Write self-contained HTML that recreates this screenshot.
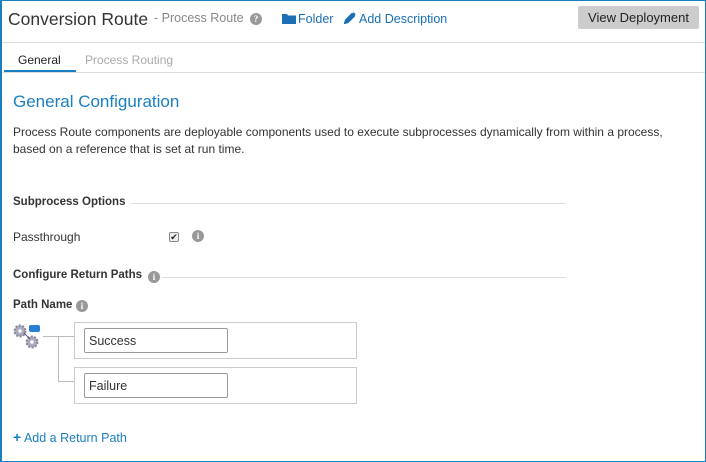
<!DOCTYPE html>
<html><head><style>
*{margin:0;padding:0;box-sizing:border-box}
body{width:706px;height:462px;background:#fff;font-family:"Liberation Sans",sans-serif;position:relative;overflow:hidden;color:#333}
.frame{position:absolute;left:0;top:0;width:706px;height:462px;border:1px solid #1a7fc1;border-left-width:2px}
.a{position:absolute;white-space:nowrap}
.hr{position:absolute;height:1px;background:#ddd}
.info{position:absolute;width:12px;height:12px;border-radius:50%;background:#999;color:#fff;font-size:9px;font-weight:bold;text-align:center;line-height:12px;font-family:"Liberation Serif",serif}
.box{position:absolute;border:1px solid #ccc}
.inp{position:absolute;border:1px solid #999;border-radius:2px;height:25px;width:144px;font-size:12.5px;padding:5px 4px;color:#333}
.h{font-size:11.5px;font-weight:bold;color:#333}
</style></head><body>
<div class="frame"></div>
<div class="a" style="left:8px;top:9px;font-size:17.5px;color:#333">Conversion Route</div>
<div class="a" style="left:154px;top:11px;font-size:12.5px;color:#888">- Process Route</div>
<div class="info" style="left:250px;top:13px">?</div>
<svg class="a" style="left:282px;top:13px" width="14" height="11"><path d="M0 1h5l1 1.5h8V11H0z" fill="#1a6fb5"/></svg>
<div class="a" style="left:298px;top:12px;font-size:12.5px;color:#1a6fb5">Folder</div>
<svg class="a" style="left:344px;top:12px" width="12" height="12"><path d="M1 11l1-3 6-6 2 2-6 6z M9 1l2 2" stroke="#1a6fb5" stroke-width="2" fill="#1a6fb5"/></svg>
<div class="a" style="left:359px;top:12px;font-size:12.5px;color:#1a6fb5">Add Description</div>
<div class="a" style="left:578px;top:6px;width:121px;height:23px;background:#ccc;border-radius:2px;font-size:13px;color:#222;text-align:center;line-height:23px">View Deployment</div>
<div class="hr" style="left:2px;top:42px;width:703px"></div>
<div class="a" style="left:18px;top:53px;font-size:12px;color:#222">General</div>
<div class="a" style="left:4px;top:70px;width:72px;height:2px;background:#1a7fc1"></div>
<div class="a" style="left:85px;top:53px;font-size:12px;color:#aaa">Process Routing</div>
<div class="hr" style="left:2px;top:72px;width:703px"></div>
<div class="a" style="left:13px;top:92px;font-size:17px;color:#1a7fc1">General Configuration</div>
<div class="a" style="left:13px;top:124px;font-size:12px;color:#333;line-height:17px">Process Route components are deployable components used to execute subprocesses dynamically from within a process,<br>based on a reference that is set at run time.</div>
<div class="a h" style="left:13px;top:196px">Subprocess Options</div>
<div class="hr" style="left:131px;top:203px;width:435px"></div>
<div class="a" style="left:13px;top:230px;font-size:12px;color:#333">Passthrough</div>
<div class="a" style="left:169px;top:232px;width:10px;height:10px;border:1px solid #888;border-radius:2px;background:#eee;font-size:9px;line-height:8px;text-align:center;color:#222">✔</div>
<div class="info" style="left:192px;top:230px">i</div>
<div class="a h" style="left:13px;top:269px">Configure Return Paths</div>
<div class="info" style="left:148px;top:271px">i</div>
<div class="hr" style="left:162px;top:277px;width:404px"></div>
<div class="a h" style="left:13px;top:299px">Path Name</div>
<div class="info" style="left:76px;top:300px">i</div>
<svg class="a" style="left:12px;top:322px" width="30" height="28"><circle cx="8" cy="9" r="5.5" fill="#aab" stroke="#889" stroke-width="2" stroke-dasharray="2 1.5"/><circle cx="8" cy="9" r="1.8" fill="#fff"/><circle cx="20" cy="20" r="5.5" fill="#aab" stroke="#889" stroke-width="2" stroke-dasharray="2 1.5"/><circle cx="20" cy="20" r="1.8" fill="#fff"/><rect x="17" y="3" width="11" height="7" rx="2" fill="#2a7fd4"/><path d="M12 11l6 6" stroke="#556" stroke-width="1"/></svg>
<div class="hr" style="left:43px;top:336px;width:31px;background:#bbb"></div>
<div class="a" style="left:58px;top:336px;width:1px;height:45px;background:#bbb"></div>
<div class="hr" style="left:58px;top:381px;width:16px;background:#bbb"></div>
<div class="box" style="left:74px;top:322px;width:283px;height:37px"></div>
<div class="inp" style="left:84px;top:328px">Success</div>
<div class="box" style="left:74px;top:367px;width:283px;height:37px"></div>
<div class="inp" style="left:84px;top:373px">Failure</div>
<div class="a" style="left:13px;top:429px;font-size:12.5px;color:#1a7fc1"><b style="font-size:14px">+</b> Add a Return Path</div>
</body></html>
